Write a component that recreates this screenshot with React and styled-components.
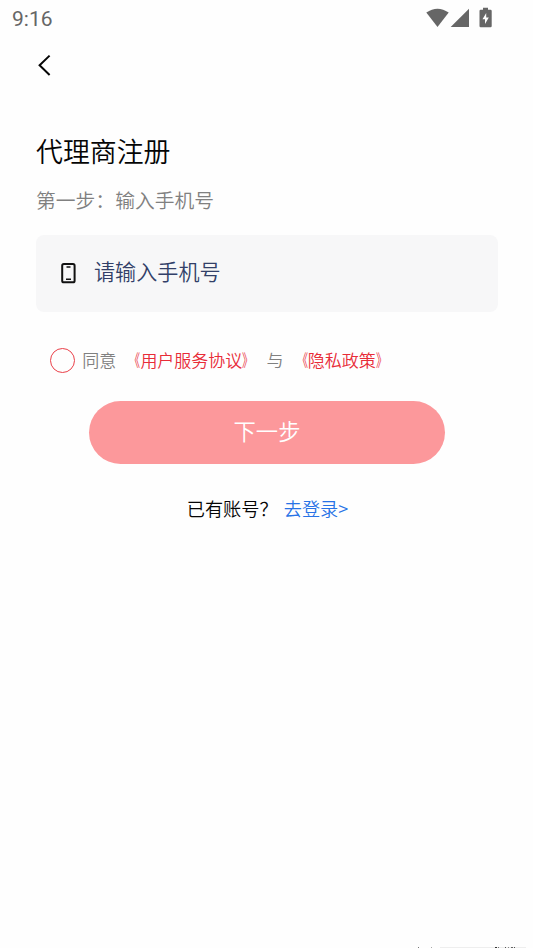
import React from "react";
import styled, { createGlobalStyle } from "styled-components";

const GlobalStyle = createGlobalStyle`
  * {
    box-sizing: border-box;
  }
  body {
    margin: 0;
    background: #fefefe;
    font-family: "Noto Sans CJK SC DemiLight", "Noto Sans CJK SC", sans-serif;
    font-weight: 350;
  }
`;

const Page = styled.div`
  display: flex;
  flex-direction: column;
  height: 948px;
  overflow: hidden;
`;

const StatusBar = styled.div`
  display: flex;
  justify-content: space-between;
  height: 38px;
  padding: 0 40px 0 12px;
`;

const Clock = styled.span`
  font-family: Roboto, sans-serif;
  font-size: 21px;
  font-weight: 400;
  line-height: 38px;
  color: #666;
`;

const StatusIcons = styled.svg`
  width: 68px;
  height: 38px;
  fill: #666;
`;

const NavBar = styled.nav`
  display: flex;
  align-items: center;
  height: 54px;
  padding-left: 36px;
`;

const BackButton = styled.button`
  display: flex;
  padding: 0;
  border: 0;
  background: none;
`;

const Content = styled.main`
  display: flex;
  flex-direction: column;
  flex: 1;
  padding: 39px 35px 0 36px;
`;

const Title = styled.h1`
  margin: 0;
  font-size: 26.9px;
  font-weight: 350;
  line-height: 40px;
  color: #050505;
`;

const Step = styled.p`
  margin: 14px 0 20px;
  font-size: 19.8px;
  line-height: 30px;
  color: #808080;
`;

const Field = styled.label`
  display: flex;
  align-items: center;
  height: 77px;
  padding: 0 0 0 25px;
  border-radius: 8px;
  background: #f7f7f8;
`;

const PhoneInput = styled.input`
  flex: 1;
  height: 40px;
  margin: 0 0 6px 18px;
  padding: 0;
  border: 0;
  outline: 0;
  background: none;
  font-family: inherit;
  font-size: 21.1px;
  font-weight: 350;

  &::placeholder {
    color: #323f68;
    opacity: 1;
  }
`;

const Agreement = styled.div`
  display: flex;
  align-items: center;
  gap: 7.2px;
  height: 26px;
  margin: 35px 0 0 14px;
  font-size: 17px;
  line-height: 24px;
  color: #808080;
  white-space: nowrap;
`;

const Radio = styled.span`
  width: 25px;
  height: 25px;
  border: 1px solid #ea4049;
  border-radius: 50%;
`;

const Policy = styled.a`
  color: #e82c38;
`;

const Bracket = styled.span`
  display: inline-block;
  transform: scaleX(0.65);
  transform-origin: ${({ $side }) => ($side === "open" ? "right" : "left")} center;
`;

const NextButton = styled.button`
  align-self: center;
  width: 356px;
  height: 63px;
  margin-top: 28px;
  padding: 0 0 5px;
  border: 0;
  border-radius: 32px;
  background: #fc989b;
  font-family: inherit;
  font-size: 22.3px;
  font-weight: 350;
  color: #fff;
`;

const Login = styled.p`
  display: flex;
  justify-content: center;
  gap: 6px;
  margin: 30px 0 0 1px;
  font-size: 18.2px;
  line-height: 28px;
  color: #050505;
`;

const LoginLink = styled.a`
  color: #2873e6;
`;

const BottomEdge = styled.svg`
  display: block;
  width: 533px;
  height: 2px;
`;

const marks = [
  [418, 1, "#777"],
  [431, 1, "#aaa"],
  [495, 2, "#333"],
  [498, 1, "#777"],
  [505, 1, "#555"],
  [508, 1, "#888"],
  [511, 2, "#666"],
  [514, 1, "#555"],
];

function PolicyLink({ name }) {
  return (
    <Policy>
      <Bracket $side="open">《</Bracket>
      {name}
      <Bracket $side="close">》</Bracket>
    </Policy>
  );
}

export default function App() {
  return (
    <Page>
      <GlobalStyle />
      <StatusBar>
        <Clock>9:16</Clock>
        <StatusIcons viewBox="425 0 68 38">
          <path d="M426.3 12.6Q437.5 4.9 448.7 12.6L437.5 26.9Z" />
          <path d="M469 8.7V27H450.7Z" />
          <path
            fillRule="evenodd"
            d="M483 7.7h5v2.1h2.5q1.2 0 1.2 1.2v15q0 1.2-1.2 1.2h-9.8q-1.2 0-1.2-1.2V11q0-1.2 1.2-1.2h2.3zM486.2 13l-3.7 6.3h2.5V24l3.8-6.5h-2.6z"
          />
        </StatusIcons>
      </StatusBar>
      <NavBar>
        <BackButton aria-label="返回">
          <svg width="18" height="24" fill="none" stroke="#050505" strokeWidth="2">
            <path d="M13.6 2.6L3.6 12.3L13.6 22" />
          </svg>
        </BackButton>
      </NavBar>
      <Content>
        <Title>代理商注册</Title>
        <Step>第一步：输入手机号</Step>
        <Field>
          <svg width="15" height="21" fill="none" stroke="#111">
            <rect x="1.2" y="1.1" width="12.4" height="18.2" rx="1.6" strokeWidth="2" />
            <path d="M5.5 4h4M5 16.2h5" strokeWidth="1.6" />
          </svg>
          <PhoneInput type="tel" placeholder="请输入手机号" />
        </Field>
        <Agreement>
          <Radio />
          <span>同意</span>
          <PolicyLink name="用户服务协议" />
          <span>与</span>
          <PolicyLink name="隐私政策" />
        </Agreement>
        <NextButton>下一步</NextButton>
        <Login>
          <span>已有账号？</span>
          <LoginLink>去登录&gt;</LoginLink>
        </Login>
      </Content>
      <BottomEdge>
        <rect x="440" y="1" width="86" height="1" fill="#eee" />
        {marks.map(([x, width, fill]) => (
          <rect key={x} x={x} y="1" width={width} height="1" fill={fill} />
        ))}
      </BottomEdge>
    </Page>
  );
}
